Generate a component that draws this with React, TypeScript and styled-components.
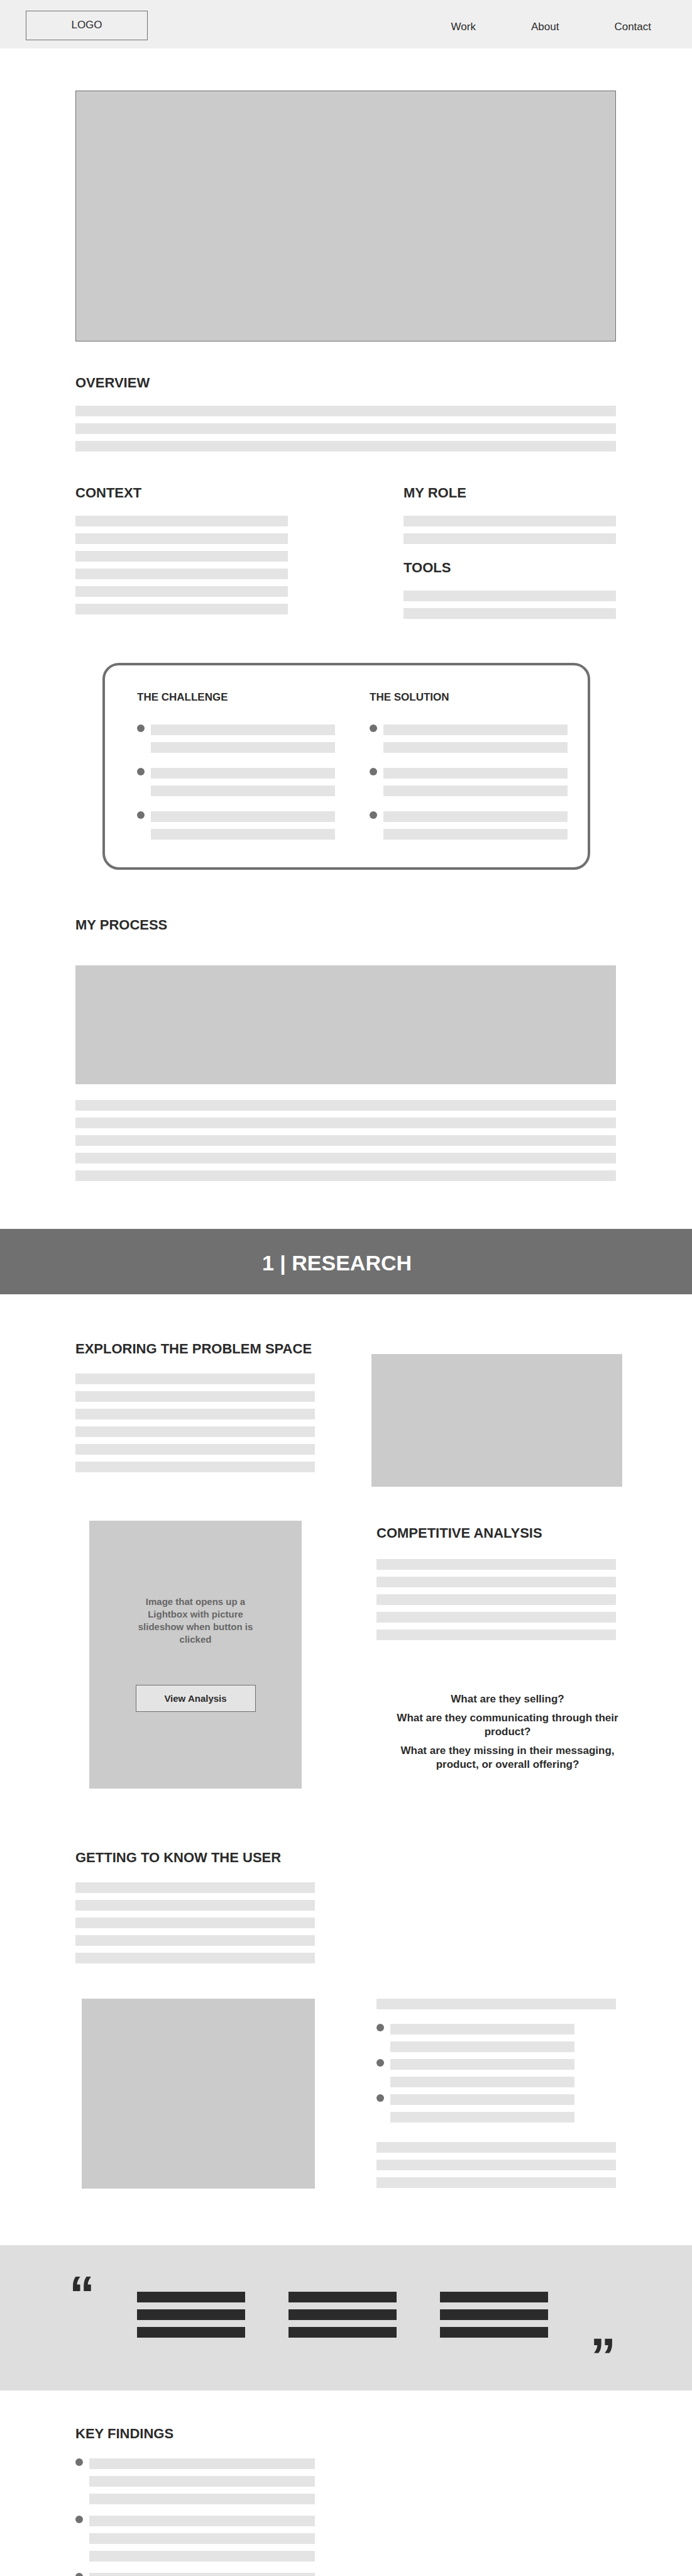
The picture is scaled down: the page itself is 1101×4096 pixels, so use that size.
import React from "react";
import styled, { createGlobalStyle } from "styled-components";

const ink = "#2b2b2b";
const slate = "#707070";

const GlobalStyle = createGlobalStyle`
  *, *::before, *::after { box-sizing: border-box; }
  body {
    margin: 0;
    background: #fff;
    color: ${ink};
    font-family: "Liberation Sans", Arial, Helvetica, sans-serif;
  }
  h1, h2, h3, p, ul { margin: 0; padding: 0; }
  ul { list-style: none; }
`;

const Header = styled.header`
  display: flex;
  justify-content: space-between;
  align-items: flex-start;
  height: 77px;
  padding: 17px 65px 0 41px;
  background: #efefef;
`;

const Logo = styled.a`
  width: 194px;
  height: 47px;
  border: 1px solid ${slate};
  color: inherit;
  font-size: 17px;
  line-height: 43px;
  text-align: center;
  text-decoration: none;
`;

const Nav = styled.nav`
  display: flex;
  gap: 88px;
  padding-top: 16px;
`;

const NavLink = styled.a`
  color: inherit;
  font-size: 17px;
  line-height: 20px;
  text-decoration: none;
`;

const Section = styled.section<{ $top: number }>`
  padding: ${(p) => p.$top}px 121px 0 120px;
`;

const Row = styled.div<{ $top?: number }>`
  display: flex;
  justify-content: space-between;
  align-items: flex-start;
  margin-top: ${(p) => p.$top ?? 0}px;
`;

const Column = styled.div<{ $width: number; $top?: number }>`
  flex: 0 1 ${(p) => p.$width}px;
  max-width: ${(p) => p.$width}px;
  padding-top: ${(p) => p.$top ?? 0}px;
`;

const Heading = styled.h2<{ $gap?: number }>`
  margin-bottom: ${(p) => p.$gap ?? 24}px;
  font-size: 22px;
  line-height: 24px;
  white-space: nowrap;
`;

const CardHeading = styled.h3`
  margin-bottom: 33px;
  font-size: 17px;
  line-height: 20px;
`;

const LineStack = styled.div<{ $gap?: number }>`
  display: grid;
  flex: 1;
  gap: 11px;
  margin-bottom: ${(p) => p.$gap ?? 0}px;
`;

const Line = styled.div<{ $dark?: boolean }>`
  height: 17px;
  background: ${(p) => (p.$dark ? ink : "#e4e4e4")};
`;

const Picture = styled.div<{ $height: number; $framed?: boolean }>`
  height: ${(p) => p.$height}px;
  border: ${(p) => (p.$framed ? `1px solid ${slate}` : "0")};
  background: #cbcbcb;
`;

const WidePicture = styled(Picture)`
  margin-right: -10px;
`;

const InsetPicture = styled(Picture)`
  margin-left: 10px;
`;

const BulletList = styled.ul<{ $gap: number }>`
  display: grid;
  gap: ${(p) => p.$gap}px;
`;

const Bullet = styled.li`
  display: flex;
  gap: 10px;

  &::before {
    content: "";
    flex: none;
    width: 12px;
    height: 12px;
    border-radius: 50%;
    background: ${slate};
  }
`;

const Card = styled.section`
  display: flex;
  justify-content: space-between;
  margin: 70px 162px 0 163px;
  padding: 41px 32px 44px 51px;
  border: 4px solid ${slate};
  border-radius: 26px;
`;

const ChapterBand = styled.div`
  margin-top: 76px;
  padding: 34px 29px 30px 0;
  background: ${slate};
`;

const ChapterTitle = styled.h1`
  color: #fff;
  font-size: 34px;
  line-height: 40px;
  text-align: center;
`;

const Lightbox = styled.div`
  display: flex;
  flex-direction: column;
  align-items: center;
  height: 426px;
  margin-left: 22px;
  padding-top: 119px;
  background: #cbcbcb;
`;

const LightboxText = styled.p`
  width: 200px;
  color: #666;
  font-size: 15px;
  font-weight: bold;
  line-height: 20px;
  text-align: center;
`;

const Button = styled.button`
  width: 191px;
  height: 43px;
  margin-top: 62px;
  padding: 0;
  border: 1px solid ${slate};
  background: #e4e4e4;
  color: ${ink};
  font: bold 15px "Liberation Sans", Arial, Helvetica, sans-serif;
`;

const Questions = styled.div`
  display: grid;
  gap: 8px;
  margin: 83px -8px 0 28px;
  font-size: 17px;
  font-weight: bold;
  line-height: 22px;
  text-align: center;
`;

const UserNotes = styled.div`
  margin: 23px 66px 31px 0;
`;

const QuoteBand = styled.section`
  display: flex;
  align-items: flex-start;
  justify-content: space-between;
  height: 231px;
  margin-top: 90px;
  padding: 0 121px 0 110px;
  background: #dedede;
`;

const QuoteMark = styled.span<{ $top: number }>`
  width: 41px;
  margin-top: ${(p) => p.$top}px;
  font-size: 82px;
  font-weight: bold;
  line-height: 82px;
`;

const QuoteColumns = styled.div`
  display: grid;
  grid-template-columns: repeat(3, 172px);
  gap: 69px;
  padding-top: 74px;
`;

const Findings = styled.div`
  max-height: 187px;
  overflow: hidden;
`;

function Lines({ count, gap, dark }: { count: number; gap?: number; dark?: boolean }) {
  return (
    <LineStack $gap={gap}>
      {Array.from({ length: count }, (_, i) => (
        <Line key={i} $dark={dark} />
      ))}
    </LineStack>
  );
}

function Bullets({ lines, gap }: { lines: number; gap: number }) {
  return (
    <BulletList $gap={gap}>
      {[0, 1, 2].map((i) => (
        <Bullet key={i}>
          <Lines count={lines} />
        </Bullet>
      ))}
    </BulletList>
  );
}

export default function App() {
  return (
    <>
      <GlobalStyle />
      <Header>
        <Logo href="#">LOGO</Logo>
        <Nav>
          <NavLink href="#work">Work</NavLink>
          <NavLink href="#about">About</NavLink>
          <NavLink href="#contact">Contact</NavLink>
        </Nav>
      </Header>
      <main>
        <Section $top={67}>
          <Picture $height={399} $framed />
        </Section>
        <Section $top={54}>
          <Heading>OVERVIEW</Heading>
          <Lines count={3} />
          <Row $top={54}>
            <Column $width={338}>
              <Heading>CONTEXT</Heading>
              <Lines count={6} />
            </Column>
            <Column $width={338}>
              <Heading>MY ROLE</Heading>
              <Lines count={2} gap={26} />
              <Heading>TOOLS</Heading>
              <Lines count={2} />
            </Column>
          </Row>
        </Section>
        <Card>
          <Column $width={315}>
            <CardHeading>THE CHALLENGE</CardHeading>
            <Bullets lines={2} gap={24} />
          </Column>
          <Column $width={315}>
            <CardHeading>THE SOLUTION</CardHeading>
            <Bullets lines={2} gap={24} />
          </Column>
        </Card>
        <Section $top={76}>
          <Heading $gap={52}>MY PROCESS</Heading>
          <Picture $height={189} />
          <Row $top={25}>
            <Lines count={5} />
          </Row>
        </Section>
        <ChapterBand>
          <ChapterTitle>1 | RESEARCH</ChapterTitle>
        </ChapterBand>
        <Section $top={75}>
          <Row>
            <Column $width={381}>
              <Heading $gap={27}>EXPLORING THE PROBLEM SPACE</Heading>
              <Lines count={6} />
            </Column>
            <Column $width={389} $top={20}>
              <WidePicture $height={211} />
            </Column>
          </Row>
          <Row $top={54}>
            <Column $width={360}>
              <Lightbox>
                <LightboxText>Image that opens up a Lightbox with picture slideshow when button is clicked</LightboxText>
                <Button type="button">View Analysis</Button>
              </Lightbox>
            </Column>
            <Column $width={381} $top={8}>
              <Heading $gap={29}>COMPETITIVE ANALYSIS</Heading>
              <Lines count={5} />
              <Questions>
                <p>What are they selling?</p>
                <p>What are they communicating through their product?</p>
                <p>What are they missing in their messaging, product, or overall offering?</p>
              </Questions>
            </Column>
          </Row>
        </Section>
        <Section $top={98}>
          <Column $width={381}>
            <Heading $gap={27}>GETTING TO KNOW THE USER</Heading>
            <Lines count={5} />
          </Column>
          <Row $top={56}>
            <Column $width={381}>
              <InsetPicture $height={302} />
            </Column>
            <Column $width={381}>
              <Lines count={1} />
              <UserNotes>
                <Bullets lines={2} gap={11} />
              </UserNotes>
              <Lines count={3} />
            </Column>
          </Row>
        </Section>
        <QuoteBand>
          <QuoteMark $top={37}>“</QuoteMark>
          <QuoteColumns>
            <Lines count={3} dark />
            <Lines count={3} dark />
            <Lines count={3} dark />
          </QuoteColumns>
          <QuoteMark $top={136}>”</QuoteMark>
        </QuoteBand>
        <Section $top={57}>
          <Heading $gap={27}>KEY FINDINGS</Heading>
          <Column $width={381}>
            <Findings>
              <Bullets lines={3} gap={18} />
            </Findings>
          </Column>
        </Section>
      </main>
    </>
  );
}
